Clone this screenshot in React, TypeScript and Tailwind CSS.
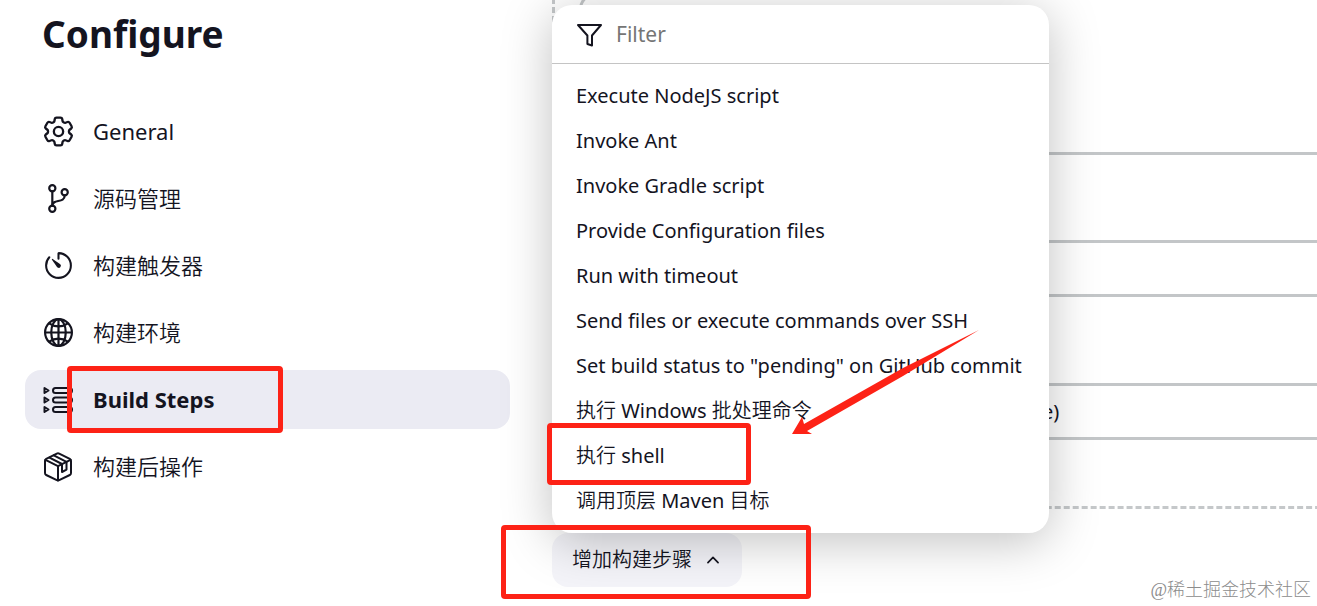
import React, { useState } from 'react';
import { IoChevronUp, IoGitBranchOutline, IoGlobeOutline, IoTimerOutline } from 'react-icons/io5';
import { HiOutlineCog6Tooth } from 'react-icons/hi2';

const GearIcon: React.FC = () => <HiOutlineCog6Tooth size={31} viewBox="2 2 20 20" />;
const BranchIcon: React.FC = () => <IoGitBranchOutline size={33} className="[&_*]:stroke-[34]" />;
const TimerIcon: React.FC = () => <IoTimerOutline size={33} />;
const GlobeIcon: React.FC = () => <IoGlobeOutline size={33} className="[&_*]:stroke-[34]" />;

const StepsIcon: React.FC = () => (
  <svg width="30" height="30" viewBox="0 0 30 30" fill="none" stroke="currentColor" strokeWidth="2" strokeLinejoin="round">
    {[5.5, 15, 24.5].map((y) => (
      <g key={y}>
        <path d={`M1.5 ${y - 2.5} L5.5 ${y} L1.5 ${y + 2.5} Z`} />
        <rect x="10" y={y - 2.5} width="19" height="5" rx="2.5" />
      </g>
    ))}
  </svg>
);

const PackageIcon: React.FC = () => (
  <svg width="30" height="30" viewBox="0 0 30 30" fill="none" stroke="currentColor" strokeWidth="2" strokeLinejoin="round" strokeLinecap="round">
    <path d="M13.8 1.6 L3.2 6.8 Q2 7.4 2 8.8 V21 Q2 22.4 3.2 23 L13.8 28.2 Q15 28.8 16.2 28.2 L26.8 23 Q28 22.4 28 21 V8.8 Q28 7.4 26.8 6.8 L16.2 1.6 Q15 1 13.8 1.6 Z" />
    <path d="M2.5 7.8 L15 14.2 L27.5 7.8 M15 14.2 V28.4" />
    <path d="M6.5 5.6 L19 12 V20 L23.5 17.6 V9.8 L10.8 3.4" />
  </svg>
);

const FunnelIcon: React.FC = () => (
  <svg width="28" height="28" viewBox="0 0 28 28" fill="none" stroke="currentColor" strokeWidth="2" strokeLinejoin="round">
    <path d="M2 4 H25 L16 14.5 V24.5 L11.4 23 V14.5 Z" />
  </svg>
);

const sections = [
  { label: 'General', icon: GearIcon },
  { label: '源码管理', icon: BranchIcon },
  { label: '构建触发器', icon: TimerIcon },
  { label: '构建环境', icon: GlobeIcon },
  { label: 'Build Steps', icon: StepsIcon },
  { label: '构建后操作', icon: PackageIcon }
];

const buildSteps = [
  'Execute NodeJS script',
  'Invoke Ant',
  'Invoke Gradle script',
  'Provide Configuration files',
  'Run with timeout',
  'Send files or execute commands over SSH',
  'Set build status to "pending" on GitHub commit',
  '执行 Windows 批处理命令',
  '执行 shell',
  '调用顶层 Maven 目标'
];

const Sidebar: React.FC = () => (
  <aside className="w-[485px] shrink-0">
    <h1 className="pl-[17px] pt-2 text-[37px] leading-[52px] font-bold">Configure</h1>
    <nav className="mt-[42px] flex flex-col gap-2">
      {sections.map((section) => {
        const Icon = section.icon;
        const isActive = section.label === 'Build Steps';

        return (
          <a
            key={section.label}
            href="#"
            className={`relative flex h-[59px] items-center gap-5 rounded-2xl pl-[18px] text-[22px] ${
              isActive ? 'bg-[#ebebf3] font-bold' : ''
            }`}
          >
            <span className="flex w-[30px] justify-center">
              <span className="shrink-0">
                <Icon />
              </span>
            </span>
            {section.label}
            {isActive && (
              <span className="absolute -top-1 left-[42px] h-[67px] w-[216px] rounded border-[5px] border-[#fd2216]" />
            )}
          </a>
        );
      })}
    </nav>
  </aside>
);

const StepMenu: React.FC = () => {
  const [filter, setFilter] = useState('');
  const visibleSteps = buildSteps.filter((step) => step.toLowerCase().includes(filter.toLowerCase()));

  return (
    <div className="absolute bottom-full left-0 w-[497px] rounded-[20px] bg-white shadow-[0_8px_50px_rgba(0,0,0,0.25)]">
      <label className="flex h-[59px] items-center gap-3 border-b border-[#c4c4c4] pt-px pl-6">
        <FunnelIcon />
        <input
          aria-label="Filter"
          placeholder="Filter"
          value={filter}
          onChange={(e) => setFilter(e.target.value)}
          className="min-w-0 flex-1 bg-transparent text-[21px] outline-none placeholder:text-[#757575]"
        />
      </label>
      <ul className="pt-[9px] pb-[10px]">
        {visibleSteps.map((step) => (
          <li key={step} className="relative">
            <button type="button" className="h-[45px] w-full px-6 text-left text-xl whitespace-nowrap">
              {step}
            </button>
            {step === '执行 shell' && (
              <span className="pointer-events-none absolute -top-[10px] -left-[5px] h-[62px] w-[204px] rounded border-[5px] border-[#fd2216]" />
            )}
          </li>
        ))}
      </ul>
      {/* Arrow pointing at the shell step */}
      <svg
        className="pointer-events-none absolute right-[70px] bottom-[98px]"
        width="188"
        height="105"
        viewBox="0 0 188 105"
        fill="#fd2216"
      >
        <path d="M188 0 L112 38 L13 94 L11 87 L1 104 L21 104 L16 101 L112 46 Z" />
      </svg>
    </div>
  );
};

const App: React.FC = () => {
  const [isOpen, setIsOpen] = useState(true);

  return (
    <div className="relative flex min-h-screen gap-[42px] overflow-hidden bg-white pl-[25px] font-['Noto_Sans','Noto_Sans_CJK_SC_DemiLight','Noto_Sans_CJK_SC_Light','Noto_Sans_CJK_SC',sans-serif] text-[#14141f]">
      <Sidebar />
      <main className="min-w-0 flex-1">
        {/* Step being edited, it runs past the right edge of the window */}
        <section className="-mt-5 -mr-10 border-[3px] border-dashed border-[#c5c8ca] pt-[10px] pr-10 pb-[66px] pl-6">
          <div className="-mr-10 h-[162px] rounded-2xl border-[3px] border-[#c3c6c8]" />
          <input
            aria-label="Source files"
            className="mt-[85px] block h-[57px] w-[calc(100%+40px)] rounded-2xl border-[3px] border-[#c3c6c8] px-4 text-xl"
          />
          <input
            aria-label="Exec timeout"
            defaultValue="e)"
            className="mt-[86px] block h-[57px] w-[calc(100%+40px)] rounded-2xl border-[3px] border-[#c3c6c8] pl-[460px] text-xl"
          />
        </section>
        <div className="relative mt-6 w-[190px]">
          <button
            type="button"
            onClick={() => setIsOpen(!isOpen)}
            className="flex h-[54px] w-full items-center gap-3 rounded-2xl bg-[#f4f4f9] pl-5 text-xl whitespace-nowrap"
          >
            增加构建步骤
            <IoChevronUp size={18} />
          </button>
          {isOpen && <StepMenu />}
          <span className="pointer-events-none absolute -top-2 -left-[51px] h-[74px] w-[310px] rounded border-[5px] border-[#fd2216]" />
        </div>
      </main>
      {/* Watermark */}
      <p className="absolute right-[6px] bottom-0 font-['Liberation_Serif','Noto_Sans_CJK_SC_Light','Noto_Sans_CJK_SC',serif] text-lg leading-8 text-[#8c8c8c]">
        @稀土掘金技术社区
      </p>
    </div>
  );
};

export default App;
